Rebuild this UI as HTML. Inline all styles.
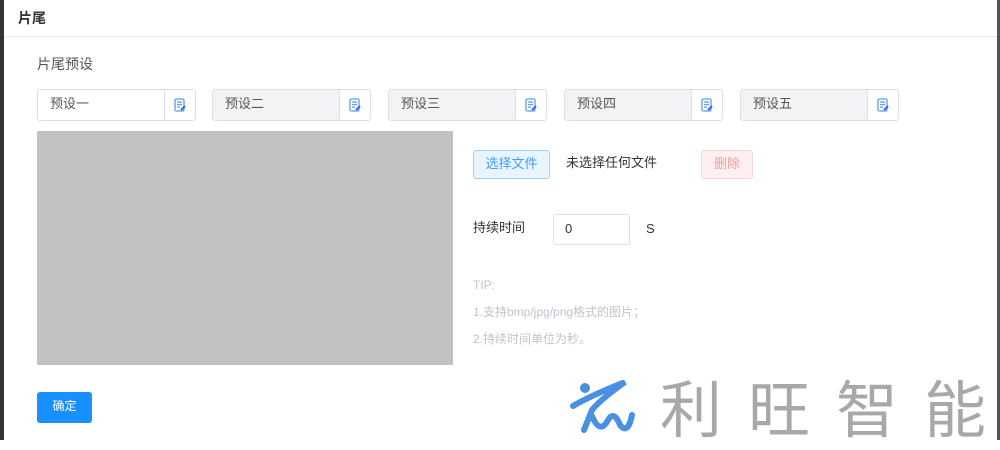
<!DOCTYPE html>
<html><head><meta charset="utf-8"><style>
body{margin:0;width:1000px;height:440px;overflow:hidden;background:#fff;font-family:"Liberation Sans","Noto Sans CJK SC",sans-serif;position:relative}
.a{position:absolute}
.edge{left:0;top:0;width:4px;height:440px;background:#333}
.edge2{right:0;top:0;width:3px;height:440px;background:#555}
.hdr{left:18px;top:8px;font-size:14px;font-weight:bold;color:#333;line-height:20px}
.line{left:4px;top:36px;width:993px;height:1px;background:#e8e8e8}
.inp{height:32px;border:1px solid #dcdfe6;border-radius:3px;box-sizing:border-box;width:159px;background:#f2f3f5}
.inp span{position:absolute;left:12px;top:4px;font-size:13px;color:#555;line-height:20px}
.inp i{position:absolute;right:0;top:0;width:30px;height:30px;border-left:1px solid #dcdfe6;background:#fff;border-radius:0 3px 3px 0}
.inp svg{position:absolute;left:9px;top:8px}
.t{font-size:13px;color:#333;line-height:18px}
.g{font-size:12px;color:#c0c4cc;line-height:16px}
</style></head><body>
<div class="a edge"></div><div class="a edge2"></div>
<div class="a hdr">片尾</div>
<div class="a line"></div>
<div class="a t" style="left:37px;top:55px;font-size:14px;color:#555">片尾预设</div>
<div class="a inp" style="left:37px;top:89px;background:#fff"><span>预设一</span><i><svg width="12" height="14" viewBox="0 0 12 14"><rect x="1" y="1" width="9" height="12" rx="1.5" fill="none" stroke="#5b9bec" stroke-width="1.3"/><path d="M3 4h5M3 6.5h5M3 9h3" stroke="#5b9bec" stroke-width="1.2"/><path d="M7 12l4-4" stroke="#2f6fd8" stroke-width="2"/></svg></i></div>
<div class="a inp" style="left:212px;top:89px"><span>预设二</span><i><svg width="12" height="14" viewBox="0 0 12 14"><rect x="1" y="1" width="9" height="12" rx="1.5" fill="none" stroke="#5b9bec" stroke-width="1.3"/><path d="M3 4h5M3 6.5h5M3 9h3" stroke="#5b9bec" stroke-width="1.2"/><path d="M7 12l4-4" stroke="#2f6fd8" stroke-width="2"/></svg></i></div>
<div class="a inp" style="left:388px;top:89px"><span>预设三</span><i><svg width="12" height="14" viewBox="0 0 12 14"><rect x="1" y="1" width="9" height="12" rx="1.5" fill="none" stroke="#5b9bec" stroke-width="1.3"/><path d="M3 4h5M3 6.5h5M3 9h3" stroke="#5b9bec" stroke-width="1.2"/><path d="M7 12l4-4" stroke="#2f6fd8" stroke-width="2"/></svg></i></div>
<div class="a inp" style="left:564px;top:89px"><span>预设四</span><i><svg width="12" height="14" viewBox="0 0 12 14"><rect x="1" y="1" width="9" height="12" rx="1.5" fill="none" stroke="#5b9bec" stroke-width="1.3"/><path d="M3 4h5M3 6.5h5M3 9h3" stroke="#5b9bec" stroke-width="1.2"/><path d="M7 12l4-4" stroke="#2f6fd8" stroke-width="2"/></svg></i></div>
<div class="a inp" style="left:740px;top:89px"><span>预设五</span><i><svg width="12" height="14" viewBox="0 0 12 14"><rect x="1" y="1" width="9" height="12" rx="1.5" fill="none" stroke="#5b9bec" stroke-width="1.3"/><path d="M3 4h5M3 6.5h5M3 9h3" stroke="#5b9bec" stroke-width="1.2"/><path d="M7 12l4-4" stroke="#2f6fd8" stroke-width="2"/></svg></i></div>
<div class="a" style="left:37px;top:131px;width:416px;height:234px;background:#c2c2c2"></div>
<div class="a t" style="left:473px;top:150px;width:77px;height:29px;box-sizing:border-box;border:1px solid #a3d0fd;background:#e8f4ff;border-radius:3px;color:#409eff;text-align:center;line-height:25px">选择文件</div>
<div class="a t" style="left:566px;top:154px">未选择任何文件</div>
<div class="a t" style="left:701px;top:150px;width:52px;height:29px;box-sizing:border-box;border:1px solid #fbd5d5;background:#fef0f0;border-radius:3px;color:#f3a0a0;text-align:center;line-height:25px">删除</div>
<div class="a t" style="left:473px;top:219px">持续时间</div>
<div class="a" style="left:553px;top:214px;width:77px;height:31px;box-sizing:border-box;border:1px solid #dcdfe6;border-radius:3px"></div>
<div class="a t" style="left:565px;top:220px">0</div>
<div class="a t" style="left:646px;top:220px">S</div>
<div class="a g" style="left:473px;top:277px">TIP:</div>
<div class="a g" style="left:473px;top:304px">1.支持bmp/jpg/png格式的图片；</div>
<div class="a g" style="left:473px;top:331px">2.持续时间单位为秒。</div>
<div class="a" style="left:37px;top:392px;width:55px;height:31px;background:#1890ff;border-radius:3px;color:#fff;font-size:12px;text-align:center;line-height:29px">确定</div>
<svg class="a" style="left:570px;top:380px" width="70" height="58" viewBox="0 0 70 58"><circle cx="15" cy="8" r="5" fill="#4a90e2"/><path d="M3 26 Q20 16 55 2 Q30 20 22 30 L14 50" fill="none" stroke="#4a90e2" stroke-width="6" stroke-linecap="round"/><path d="M22 36 Q30 55 38 40 Q44 30 50 45 Q58 55 62 35" fill="none" stroke="#4a90e2" stroke-width="6" stroke-linecap="round"/></svg>
<div class="a" style="left:660px;top:370px;font-size:62px;letter-spacing:26px;color:#a8a8a8;line-height:70px;font-family:'Noto Sans CJK SC',sans-serif;white-space:nowrap">利旺智能</div>
</body></html>
